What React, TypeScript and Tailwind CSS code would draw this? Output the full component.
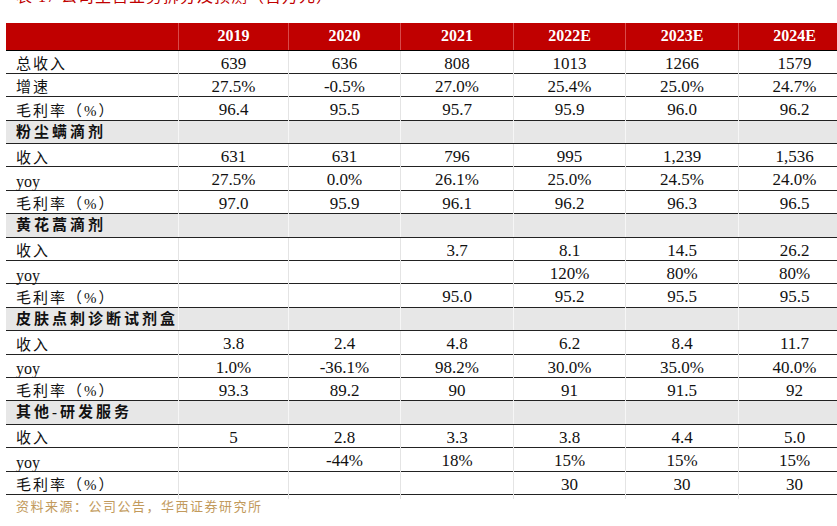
import * as React from "react";

type Row = { label: string; values?: string[]; section?: boolean };

const years = ["2019", "2020", "2021", "2022E", "2023E", "2024E"];

const rows: Row[] = [
  { label: "总收入", values: ["639", "636", "808", "1013", "1266", "1579"] },
  { label: "增速", values: ["27.5%", "-0.5%", "27.0%", "25.4%", "25.0%", "24.7%"] },
  { label: "毛利率（%）", values: ["96.4", "95.5", "95.7", "95.9", "96.0", "96.2"] },
  { label: "粉尘螨滴剂", section: true },
  { label: "收入", values: ["631", "631", "796", "995", "1,239", "1,536"] },
  { label: "yoy", values: ["27.5%", "0.0%", "26.1%", "25.0%", "24.5%", "24.0%"] },
  { label: "毛利率（%）", values: ["97.0", "95.9", "96.1", "96.2", "96.3", "96.5"] },
  { label: "黄花蒿滴剂", section: true },
  { label: "收入", values: ["", "", "3.7", "8.1", "14.5", "26.2"] },
  { label: "yoy", values: ["", "", "", "120%", "80%", "80%"] },
  { label: "毛利率（%）", values: ["", "", "95.0", "95.2", "95.5", "95.5"] },
  { label: "皮肤点刺诊断试剂盒", section: true },
  { label: "收入", values: ["3.8", "2.4", "4.8", "6.2", "8.4", "11.7"] },
  { label: "yoy", values: ["1.0%", "-36.1%", "98.2%", "30.0%", "35.0%", "40.0%"] },
  { label: "毛利率（%）", values: ["93.3", "89.2", "90", "91", "91.5", "92"] },
  { label: "其他-研发服务", section: true },
  { label: "收入", values: ["5", "2.8", "3.3", "3.8", "4.4", "5.0"] },
  { label: "yoy", values: ["", "-44%", "18%", "15%", "15%", "15%"] },
  { label: "毛利率（%）", values: ["", "", "", "30", "30", "30"] },
];

const grid = "grid grid-cols-[172px_110px_112px_113px_112px_113px_112px]";
const font = { fontFamily: '"Liberation Serif", "Noto Sans CJK SC", serif' };

export default function App() {
  return (
    <div className="w-[837px] h-[526px] overflow-hidden bg-white relative" style={font}>
      <div className="pl-[16px] -mt-[13px] h-[36px] text-[16px] leading-[20px] text-[#c00000] tracking-[1px] whitespace-nowrap">
        表 17 公司主营业务拆分及预测（百万元）
      </div>

      <div className="ml-[6px] w-[844px]">
        {/* header */}
        <div className={`${grid} h-[27.5px] bg-[#c00000] border-b-[1.5px] border-black text-white font-bold text-[16px]`}>
          <div />
          {years.map((y) => (
            <div key={y} className="flex items-center justify-center border-l border-[#d84a4a]">
              {y}
            </div>
          ))}
        </div>

        {rows.map((r, i) =>
          r.section ? (
            <div key={i} className={`${grid} h-[23.4px] bg-[#e7e7e7] border-b-[1.5px] border-[#222]`}>
              <div className="pl-[10px] flex items-center text-[15px] font-bold tracking-[3px] text-[#111] whitespace-nowrap">{r.label}</div>
              {years.map((y) => (
                <div key={y} className="border-l border-[#f6f6f6]" />
              ))}
            </div>
          ) : (
            <div key={i} className={`${grid} h-[23.4px] border-b-[1.5px] border-[#222] text-[#111]`}>
              <div className="pl-[10px] flex items-center text-[15px] tracking-[2px]">
                {r.label === "yoy" ? <span className="text-[16px] tracking-normal pt-[2px]">yoy</span> : r.label}
              </div>
              {r.values!.map((v, j) => (
                <div key={j} className="flex items-center justify-center pb-[2px] text-[17px] border-l border-[#e4e4e4]">
                  {v}
                </div>
              ))}
            </div>
          )
        )}
      </div>

      <div className="pl-[16px] mt-[2px] text-[13px] leading-[20px] text-[#c29a5c] tracking-[1.5px]">
        资料来源：公司公告，华西证券研究所
      </div>
    </div>
  );
}
